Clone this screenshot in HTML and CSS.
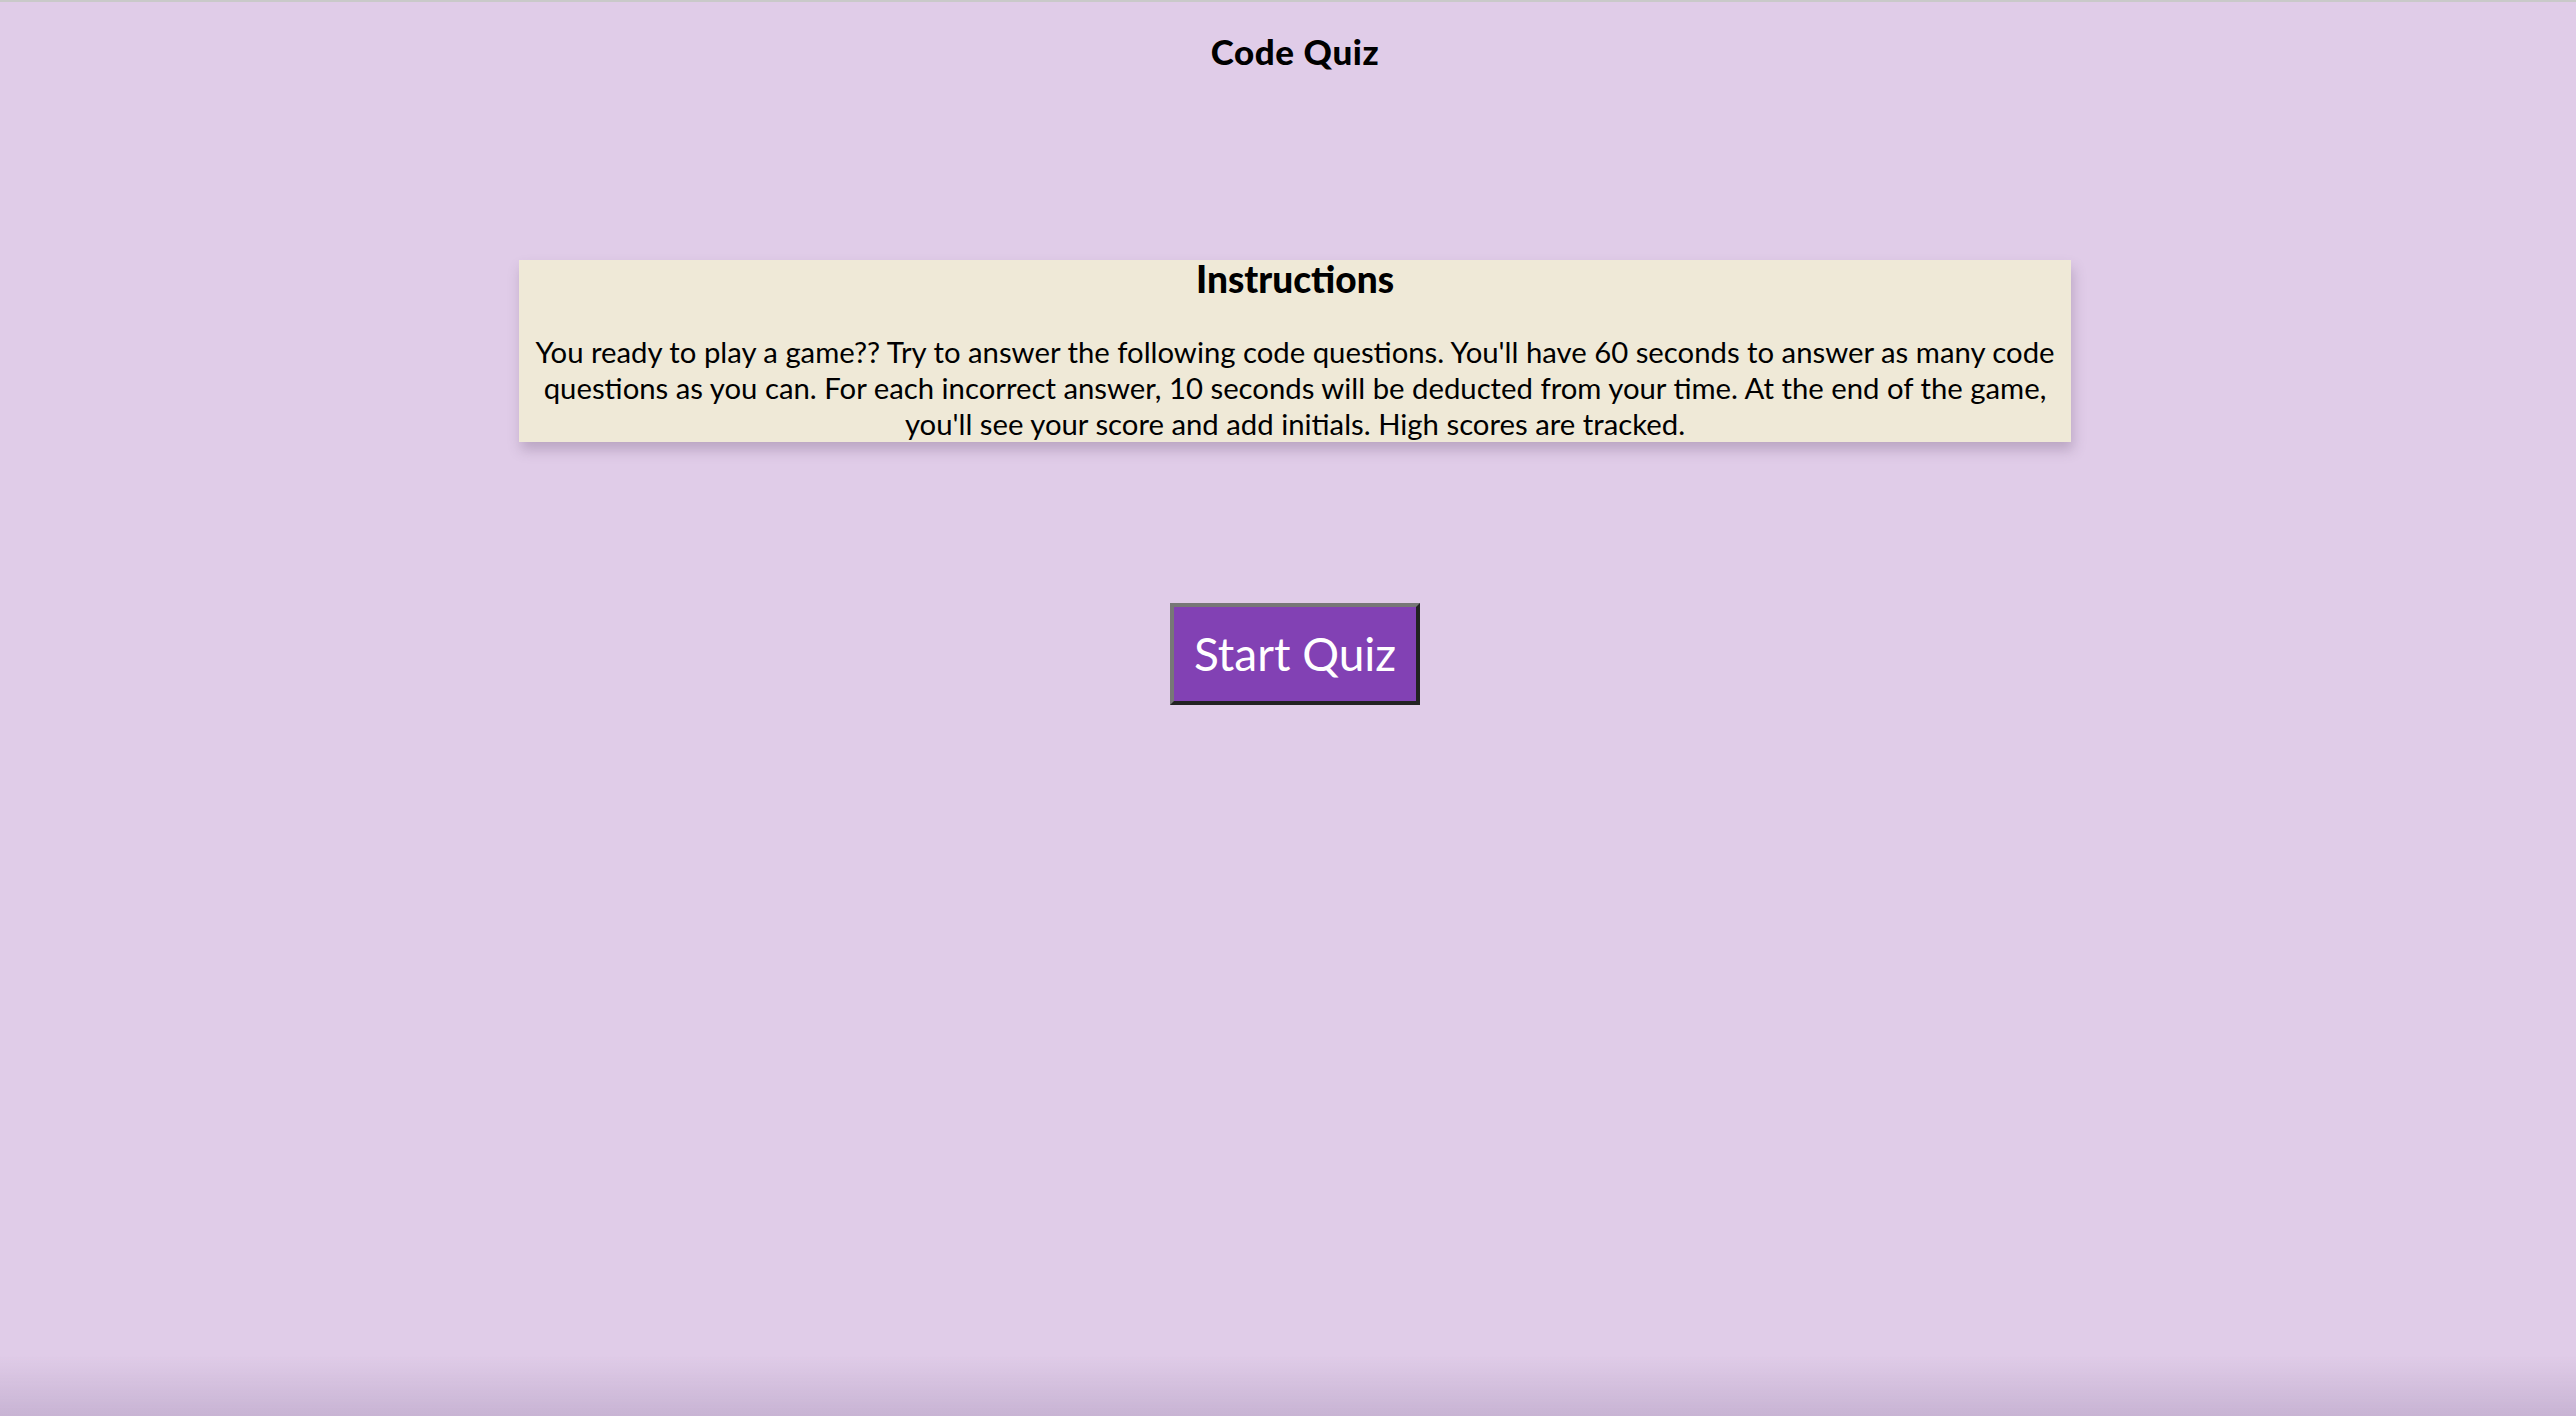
FILE: index.html
```html
<!DOCTYPE html>
<html lang="en">
<head>
<meta charset="utf-8">
<title>Code Quiz</title>
<link rel="stylesheet" href="styles.css">
</head>
<body>
<div class="frame">
  <header class="top">
    <h1 class="title">Code Quiz</h1>
  </header>
  <main class="main">
    <section class="instructions">
      <h2 class="instructions-title">Instructions</h2>
      <p class="instructions-text">You ready to play a game?? Try to answer the following code questions. You'll have 60 seconds to answer as many code questions as you can. For each incorrect answer, 10 seconds will be deducted from your time. At the end of the game, you'll see your score and add initials. High scores are tracked.</p>
    </section>
    <button class="start-btn" type="button">Start Quiz</button>
  </main>
</div>
</body>
</html>
```

FILE: styles.css
```css
html, body {
  margin: 0;
  padding: 0;
  height: 100%;
}

body {
  background: #e0cce8;
  font-family: Lato, "Open Sans", "Noto Sans", sans-serif;
  color: #000;
  overflow: hidden;
}

.frame {
  min-height: 100%;
  border-top: 2px solid #c9c9c9;
  padding-left: 14px;
  box-sizing: border-box;
  display: flex;
  flex-direction: column;
  align-items: center;
  position: relative;
}

.frame::after {
  content: "";
  position: fixed;
  left: 0;
  right: 0;
  bottom: 0;
  height: 60px;
  background: linear-gradient(to bottom, rgba(180, 160, 195, 0) 0%, rgba(180, 160, 195, 0.55) 100%);
  pointer-events: none;
}

.top {
  padding-top: 29px;
}

.title {
  margin: 0;
  font-size: 35px;
  line-height: 40px;
  font-weight: 900;
  letter-spacing: 0.6px;
}

.main {
  width: 100%;
  display: flex;
  flex-direction: column;
  align-items: center;
}

.instructions {
  margin-top: 189px;
  width: calc(60% + 15px);
  background: #efe9d7;
  box-shadow: 2px 8px 12px rgba(90, 70, 100, 0.28);
  text-align: center;
  padding: 0 10px;
  box-sizing: border-box;
}

.instructions-title {
  margin: 0;
  font-size: 37px;
  line-height: 38px;
  font-weight: 900;
}

.instructions-text {
  margin: 36px 0 0;
  font-size: 29.3px;
  line-height: 36px;
  font-weight: 400;
}

.start-btn {
  margin-top: 161px;
  font-family: inherit;
  font-size: 46px;
  line-height: 54px;
  color: #fff;
  background: #8241b4;
  padding: 20px 20px;
  border: 4px solid;
  border-color: #777 #222 #222 #777;
  cursor: pointer;
}
```
